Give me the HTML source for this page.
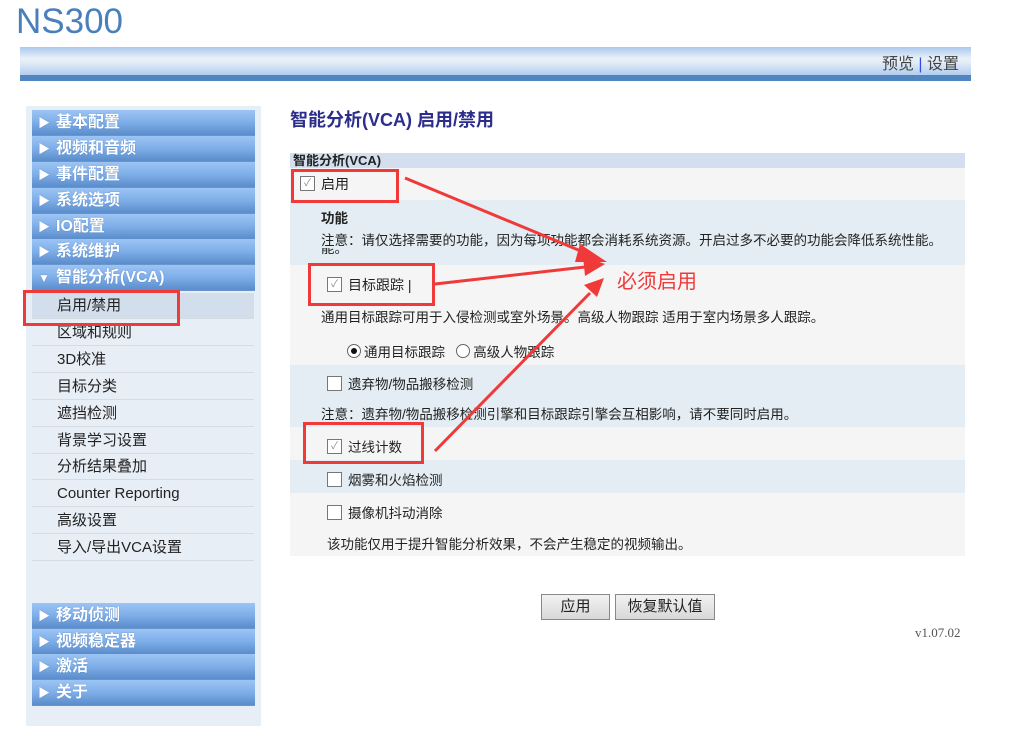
<!DOCTYPE html>
<html><head><meta charset="utf-8"><style>
body{margin:0;width:1009px;height:736px;background:#fff;position:relative;overflow:hidden;font-family:"Liberation Sans","Noto Sans CJK SC",sans-serif;font-size:14px;color:#222}
.a{position:absolute}
.logo{left:16px;top:2px;font-size:35px;color:#4a7fbd;font-family:"Liberation Sans",sans-serif}
.hdr{left:20px;top:47px;width:951px;height:28px;background:linear-gradient(#a9c8ee,#e9f0f8 40%,#e3ecf7 55%,#b1cdee);border-bottom:6px solid #4f86c0}
.hdr span{position:absolute;right:12px;top:3px;font-size:16px;color:#444}
.side{left:26px;top:106px;width:235px;height:620px;background:#e8eef6}
.m{position:absolute;left:32px;width:223px;height:25px;background:linear-gradient(#9cc4f5,#7eaee8 50%,#5a8ccb);border-bottom:1px solid #6a95cc;color:#fff;font-size:16px;line-height:25px;font-weight:bold;text-shadow:0 0 1px #4070b0}
.m i{font-style:normal;display:inline-block;width:20px;text-align:center;font-size:12px;margin-left:2px;margin-right:2px}
.s{position:absolute;left:32px;width:222px;height:26px;border-bottom:1px solid #d5dbe3;font-size:15px;line-height:26px;padding-left:25px;box-sizing:border-box}
.title{left:290px;top:106px;font-size:18px;font-weight:bold;color:#2d2d8c}
.row{position:absolute;left:290px;width:675px}
.cb{display:inline-block;width:13px;height:13px;border:1px solid #777;background:#fff;vertical-align:middle;position:relative;top:-2px;margin-right:6px;font-size:10px;line-height:13px;text-align:center;color:#888}
.rb{display:inline-block;width:12px;height:12px;border:1px solid #666;border-radius:50%;background:#fff;vertical-align:middle;position:relative;top:-2px;margin-right:3px}
.rb.on:after{content:"";position:absolute;left:3px;top:3px;width:6px;height:6px;border-radius:50%;background:#111}
.box{position:absolute;border:3px solid #f03a3a}
.btn{position:absolute;top:594px;height:24px;border:1px solid #888;background:linear-gradient(#f2f2f2,#d8d8d8);font-size:15px;line-height:24px;text-align:center}
</style></head><body>
<div class="a logo">NS300</div>
<div class="a hdr"><span>预览 <b style="color:#3050e0;font-weight:normal">|</b> 设置</span></div>
<div class="a side"></div>
<div class="m" style="top:110px"><i>▶</i>基本配置</div>
<div class="m" style="top:136px"><i>▶</i>视频和音频</div>
<div class="m" style="top:162px"><i>▶</i>事件配置</div>
<div class="m" style="top:188px"><i>▶</i>系统选项</div>
<div class="m" style="top:214px"><i>▶</i>IO配置</div>
<div class="m" style="top:239px"><i>▶</i>系统维护</div>
<div class="m" style="top:265px"><i>▼</i>智能分析(VCA)</div>
<div class="s" style="top:293px;background:#d3deec">启用/禁用</div>
<div class="s" style="top:320px">区域和规则</div>
<div class="s" style="top:347px">3D校准</div>
<div class="s" style="top:374px">目标分类</div>
<div class="s" style="top:401px">遮挡检测</div>
<div class="s" style="top:428px">背景学习设置</div>
<div class="s" style="top:454px">分析结果叠加</div>
<div class="s" style="top:481px">Counter Reporting</div>
<div class="s" style="top:508px">高级设置</div>
<div class="s" style="top:535px">导入/导出VCA设置</div>
<div class="m" style="top:603px"><i>▶</i>移动侦测</div>
<div class="m" style="top:629px"><i>▶</i>视频稳定器</div>
<div class="m" style="top:654px"><i>▶</i>激活</div>
<div class="m" style="top:680px"><i>▶</i>关于</div>

<div class="a title">智能分析(VCA) 启用/禁用</div>
<div class="row" style="top:153px;height:15px;background:#d3dfee;font-weight:bold;font-size:13px;line-height:15px;padding-left:3px;box-sizing:border-box">智能分析(VCA)</div>
<div class="row" style="top:168px;height:32px;background:#f5f5f5"><div class="a" style="left:10px;top:6px"><span class="cb">✓</span>启用</div></div>
<div class="row" style="top:200px;height:65px;background:#e3edf3;font-size:13.5px"><div class="a" style="left:31px;top:7px;font-weight:bold">功能</div><div class="a" style="left:31px;top:32px;width:640px;height:17px;overflow:hidden;line-height:17px">注意：请仅选择需要的功能，因为每项功能都会消耗系统资源。开启过多不必要的功能会降低系统性能。</div><div class="a" style="left:31px;top:48px;height:9px;overflow:hidden;line-height:17px;font-size:13.5px"><span style="position:relative;top:-8px">能。</span></div></div>
<div class="row" style="top:265px;height:100px;background:#f5f5f5;font-size:13.5px"><div class="a" style="left:37px;top:10px;font-size:14px"><span class="cb">✓</span>目标跟踪 <span style="font-weight:normal">|</span></div><div class="a" style="left:31px;top:41px">通用目标跟踪可用于入侵检测或室外场景。高级人物跟踪 适用于室内场景多人跟踪。</div><div class="a" style="left:57px;top:76px"><span class="rb on"></span>通用目标跟踪 &nbsp; <span class="rb"></span>高级人物跟踪</div></div>
<div class="row" style="top:365px;height:62px;background:#e3edf3;font-size:13.5px"><div class="a" style="left:37px;top:8px"><span class="cb"></span>遗弃物/物品搬移检测</div><div class="a" style="left:31px;top:38px">注意：遗弃物/物品搬移检测引擎和目标跟踪引擎会互相影响，请不要同时启用。</div></div>
<div class="row" style="top:427px;height:33px;background:#f5f5f5;font-size:13.5px"><div class="a" style="left:37px;top:9px"><span class="cb">✓</span>过线计数</div></div>
<div class="row" style="top:460px;height:33px;background:#e3edf3;font-size:13.5px"><div class="a" style="left:37px;top:9px"><span class="cb"></span>烟雾和火焰检测</div></div>
<div class="row" style="top:493px;height:63px;background:#f5f5f5;font-size:13.5px"><div class="a" style="left:37px;top:9px"><span class="cb"></span>摄像机抖动消除</div><div class="a" style="left:37px;top:40px">该功能仅用于提升智能分析效果，不会产生稳定的视频输出。</div></div>
<div class="btn" style="left:541px;width:67px">应用</div>
<div class="btn" style="left:615px;width:98px">恢复默认值</div>
<div class="a" style="left:915px;top:625px;font-family:'Liberation Serif',serif;font-size:13px;color:#555">v1.07.02</div>

<div class="box" style="left:23px;top:290px;width:151px;height:30px"></div>
<div class="box" style="left:291px;top:169px;width:102px;height:28px"></div>
<div class="box" style="left:308px;top:263px;width:121px;height:37px"></div>
<div class="box" style="left:303px;top:422px;width:115px;height:36px"></div>
<svg class="a" style="left:0;top:0" width="1009" height="736">
<g stroke="#f03a3a" fill="#f03a3a" stroke-width="3">
<line x1="405" y1="178" x2="588" y2="254"/><polygon points="607,262 580,244 575,262" stroke="none"/>
<line x1="435" y1="284" x2="585" y2="267"/><polygon points="605,264 583,256 585,276" stroke="none"/>
<line x1="435" y1="451" x2="590" y2="293"/><polygon points="604,278 584,285 597,297" stroke="none"/>
</g></svg>
<div class="a" style="left:617px;top:265px;font-size:20px;color:#f03a3a">必须启用</div>
</body></html>
